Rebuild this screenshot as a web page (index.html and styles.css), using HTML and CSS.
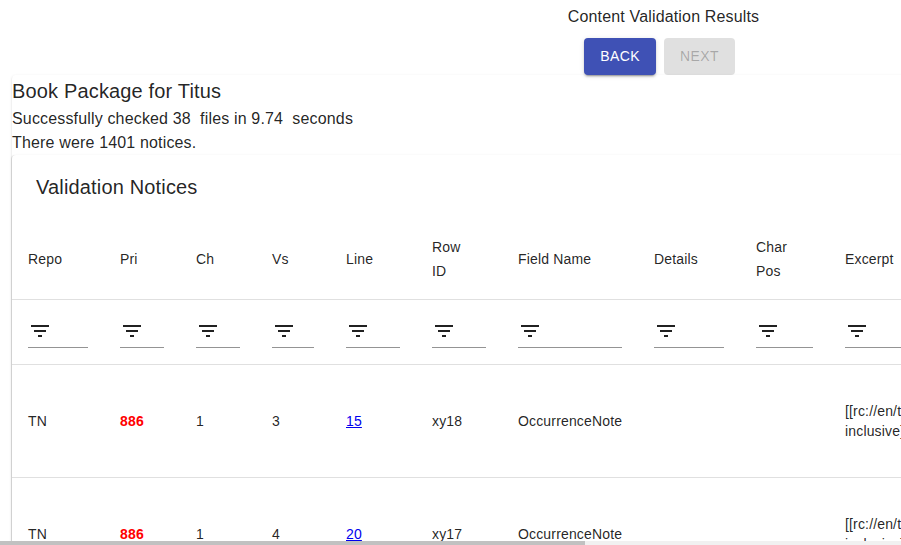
FILE: index.html
```html
<!DOCTYPE html>
<html lang="en">
<head>
<meta charset="utf-8">
<title>Content Validation Results</title>
<link rel="stylesheet" href="styles.css">
</head>
<body>
<div class="viewport">
  <div class="page">
    <header class="top">
      <div class="app-title">Content Validation Results</div>
      <div class="nav">
        <button class="btn btn-primary" type="button">Back</button>
        <button class="btn btn-disabled" type="button" disabled>Next</button>
      </div>
    </header>

    <section class="paper">
      <div class="pkg-title">Book Package for Titus</div>
      <p class="summary">Successfully checked 38&nbsp; files in 9.74&nbsp; seconds</p>
      <p class="summary">There were 1401 notices.</p>

      <div class="card">
        <div class="toolbar"><h2 class="card-title">Validation Notices</h2></div>
        <table class="notices">
          <colgroup>
            <col class="c-repo"><col class="c-pri"><col class="c-ch"><col class="c-vs"><col class="c-line">
            <col class="c-row"><col class="c-field"><col class="c-details"><col class="c-char"><col class="c-excerpt"><col class="c-msg">
          </colgroup>
          <thead>
            <tr class="head-row">
              <th><span class="sort">Repo<svg class="sort-icon" viewBox="0 0 24 24"><path d="M20 12l-1.41-1.41L13 16.17V4h-2v12.17l-5.58-5.59L4 12l8 8 8-8z"/></svg></span></th>
              <th><span class="sort">Pri<svg class="sort-icon" viewBox="0 0 24 24"><path d="M20 12l-1.41-1.41L13 16.17V4h-2v12.17l-5.58-5.59L4 12l8 8 8-8z"/></svg></span></th>
              <th><span class="sort">Ch<svg class="sort-icon" viewBox="0 0 24 24"><path d="M20 12l-1.41-1.41L13 16.17V4h-2v12.17l-5.58-5.59L4 12l8 8 8-8z"/></svg></span></th>
              <th><span class="sort">Vs<svg class="sort-icon" viewBox="0 0 24 24"><path d="M20 12l-1.41-1.41L13 16.17V4h-2v12.17l-5.58-5.59L4 12l8 8 8-8z"/></svg></span></th>
              <th><span class="sort">Line<svg class="sort-icon" viewBox="0 0 24 24"><path d="M20 12l-1.41-1.41L13 16.17V4h-2v12.17l-5.58-5.59L4 12l8 8 8-8z"/></svg></span></th>
              <th><span class="sort">Row ID<svg class="sort-icon" viewBox="0 0 24 24"><path d="M20 12l-1.41-1.41L13 16.17V4h-2v12.17l-5.58-5.59L4 12l8 8 8-8z"/></svg></span></th>
              <th><span class="sort">Field Name<svg class="sort-icon" viewBox="0 0 24 24"><path d="M20 12l-1.41-1.41L13 16.17V4h-2v12.17l-5.58-5.59L4 12l8 8 8-8z"/></svg></span></th>
              <th><span class="sort">Details<svg class="sort-icon" viewBox="0 0 24 24"><path d="M20 12l-1.41-1.41L13 16.17V4h-2v12.17l-5.58-5.59L4 12l8 8 8-8z"/></svg></span></th>
              <th><span class="sort">Char Pos<svg class="sort-icon" viewBox="0 0 24 24"><path d="M20 12l-1.41-1.41L13 16.17V4h-2v12.17l-5.58-5.59L4 12l8 8 8-8z"/></svg></span></th>
              <th><span class="sort">Excerpt<svg class="sort-icon" viewBox="0 0 24 24"><path d="M20 12l-1.41-1.41L13 16.17V4h-2v12.17l-5.58-5.59L4 12l8 8 8-8z"/></svg></span></th>
              <th><span class="sort">Message<svg class="sort-icon" viewBox="0 0 24 24"><path d="M20 12l-1.41-1.41L13 16.17V4h-2v12.17l-5.58-5.59L4 12l8 8 8-8z"/></svg></span></th>
            </tr>
            <tr class="filter-row">
              <td><div class="filter"><svg class="filter-icon" viewBox="0 0 24 24"><path d="M10 18h4v-2h-4v2zM3 6v2h18V6H3zm3 7h12v-2H6v2z"/></svg></div></td>
              <td><div class="filter"><svg class="filter-icon" viewBox="0 0 24 24"><path d="M10 18h4v-2h-4v2zM3 6v2h18V6H3zm3 7h12v-2H6v2z"/></svg></div></td>
              <td><div class="filter"><svg class="filter-icon" viewBox="0 0 24 24"><path d="M10 18h4v-2h-4v2zM3 6v2h18V6H3zm3 7h12v-2H6v2z"/></svg></div></td>
              <td><div class="filter"><svg class="filter-icon" viewBox="0 0 24 24"><path d="M10 18h4v-2h-4v2zM3 6v2h18V6H3zm3 7h12v-2H6v2z"/></svg></div></td>
              <td><div class="filter"><svg class="filter-icon" viewBox="0 0 24 24"><path d="M10 18h4v-2h-4v2zM3 6v2h18V6H3zm3 7h12v-2H6v2z"/></svg></div></td>
              <td><div class="filter"><svg class="filter-icon" viewBox="0 0 24 24"><path d="M10 18h4v-2h-4v2zM3 6v2h18V6H3zm3 7h12v-2H6v2z"/></svg></div></td>
              <td><div class="filter"><svg class="filter-icon" viewBox="0 0 24 24"><path d="M10 18h4v-2h-4v2zM3 6v2h18V6H3zm3 7h12v-2H6v2z"/></svg></div></td>
              <td><div class="filter"><svg class="filter-icon" viewBox="0 0 24 24"><path d="M10 18h4v-2h-4v2zM3 6v2h18V6H3zm3 7h12v-2H6v2z"/></svg></div></td>
              <td><div class="filter"><svg class="filter-icon" viewBox="0 0 24 24"><path d="M10 18h4v-2h-4v2zM3 6v2h18V6H3zm3 7h12v-2H6v2z"/></svg></div></td>
              <td><div class="filter"><svg class="filter-icon" viewBox="0 0 24 24"><path d="M10 18h4v-2h-4v2zM3 6v2h18V6H3zm3 7h12v-2H6v2z"/></svg></div></td>
              <td><div class="filter"><svg class="filter-icon" viewBox="0 0 24 24"><path d="M10 18h4v-2h-4v2zM3 6v2h18V6H3zm3 7h12v-2H6v2z"/></svg></div></td>
            </tr>
          </thead>
          <tbody>
            <tr class="data-row">
              <td>TN</td>
              <td class="pri">886</td>
              <td>1</td>
              <td>3</td>
              <td><a class="line-link" href="#">15</a></td>
              <td>xy18</td>
              <td>OccurrenceNote</td>
              <td></td>
              <td></td>
              <td>[[rc://en/ta/man/translate/figs-inclusive]]</td>
              <td>Unable to find/load link</td>
            </tr>
            <tr class="data-row">
              <td>TN</td>
              <td class="pri">886</td>
              <td>1</td>
              <td>4</td>
              <td><a class="line-link" href="#">20</a></td>
              <td>xy17</td>
              <td>OccurrenceNote</td>
              <td></td>
              <td></td>
              <td>[[rc://en/ta/man/translate/figs-inclusive]]</td>
              <td>Unable to find/load link</td>
            </tr>
          </tbody>
        </table>
      </div>
    </section>
  </div>
</div>
<div class="hscroll"><div class="hscroll-thumb"></div></div>
</body>
</html>
```

FILE: styles.css
```css
* { box-sizing: border-box; }

html, body {
  margin: 0;
  padding: 0;
  overflow: hidden;
  background: #fff;
}

body {
  font-family: "Liberation Sans", Arial, sans-serif;
  color: rgba(0, 0, 0, 0.87);
  letter-spacing: 0.01em;
}

.viewport {
  height: 541px;
  overflow: hidden;
}

.page {
  width: 1315px;
  padding: 8px 0 0 12px;
}

.top {
  text-align: center;
}

.app-title {
  font-size: 16px;
  line-height: 18px;
  color: rgba(0, 0, 0, 0.87);
}

.nav {
  display: flex;
  justify-content: center;
  margin-top: 12px;
}

.btn {
  margin: 0 8px 0 0;
  min-width: 64px;
  padding: 6px 16px;
  border: 0;
  border-radius: 4px;
  font-family: "Liberation Sans", Arial, sans-serif;
  font-size: 14px;
  line-height: 24.5px;
  letter-spacing: 0.4px;
  text-transform: uppercase;
}

.btn-primary {
  background: #3f51b5;
  color: #fff;
  box-shadow: 0 3px 1px -2px rgba(0,0,0,0.2), 0 2px 2px 0 rgba(0,0,0,0.14), 0 1px 5px 0 rgba(0,0,0,0.12);
}

.btn-disabled {
  background: rgba(0, 0, 0, 0.12);
  color: rgba(0, 0, 0, 0.26);
}

.paper {
  background: #fff;
  border-radius: 4px;
  box-shadow: 0 2px 1px -1px rgba(0,0,0,0.2), 0 1px 1px 0 rgba(0,0,0,0.14), 0 1px 3px 0 rgba(0,0,0,0.12);
}

.pkg-title {
  font-size: 20px;
  line-height: 32px;
}

.summary {
  margin: 0;
  font-size: 16px;
  line-height: 24px;
}

.card {
  background: #fff;
  border-radius: 4px;
  box-shadow: -1px 0 0 0 rgba(0,0,0,0.08), 0 2px 1px -1px rgba(0,0,0,0.2), 0 1px 1px 0 rgba(0,0,0,0.14), 0 1px 3px 0 rgba(0,0,0,0.12);
}

.toolbar {
  height: 64px;
  padding: 0 24px;
  display: flex;
  align-items: center;
}

.card-title {
  margin: 0;
  font-size: 20px;
  font-weight: 400;
  line-height: 32px;
}

.notices {
  width: 100%;
  table-layout: fixed;
  border-collapse: separate;
  border-spacing: 0;
}

.c-repo { width: 92px; }
.c-pri { width: 76px; }
.c-ch { width: 76px; }
.c-vs { width: 74px; }
.c-line { width: 86px; }
.c-row { width: 86px; }
.c-field { width: 136px; }
.c-details { width: 102px; }
.c-char { width: 89px; }
.c-excerpt { width: 260px; }
.c-msg { width: auto; }

.notices th,
.notices td {
  padding: 16px;
  border-bottom: 1px solid #e0e0e0;
  text-align: left;
  vertical-align: middle;
  font-size: 14px;
  color: rgba(0, 0, 0, 0.87);
}

.notices th {
  font-weight: 400;
  line-height: 24px;
}

.notices td {
  line-height: 20px;
}

.sort {
  display: inline-flex;
  align-items: center;
}

.sort-icon {
  flex: none;
  width: 18px;
  height: 18px;
  margin: 0 4px;
  opacity: 0;
}

.filter {
  display: flex;
  align-items: center;
  height: 32px;
  border-bottom: 1px solid rgba(0, 0, 0, 0.42);
}

.filter-icon {
  width: 24px;
  height: 24px;
  fill: rgba(0, 0, 0, 0.87);
  margin-right: 8px;
}

.data-row {
  height: 113px;
}

.notices td.pri {
  color: #f00;
  font-weight: 700;
}

.line-link {
  color: #0000ee;
  text-decoration: underline;
}

.hscroll {
  height: 4px;
  background: #f1f1f1;
}

.hscroll-thumb {
  width: 585px;
  height: 100%;
  background: #c1c1c1;
}
```
